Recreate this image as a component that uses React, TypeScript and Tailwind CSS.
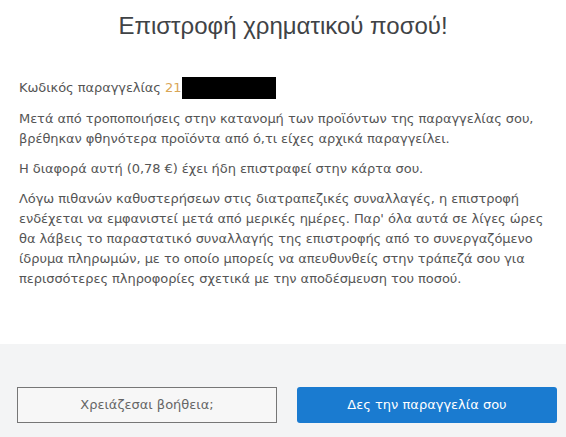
export default function App() {
  return (
    <div className="w-[566px] h-[437px] flex flex-col bg-white overflow-hidden">
      <div className="flex-1 pl-[19px] pr-[19px]">
        <h1 className="mt-[11px] text-center text-[24px] leading-[29px] text-[#3f4346] font-['Liberation_Sans',Arial,sans-serif]">
          Επιστροφή χρηματικού ποσού!
        </h1>
        <div className="mt-[37px] font-['DejaVu_Sans',Verdana,sans-serif] text-[13px] tracking-[-0.06px] leading-[20px] text-[#555555] flex flex-col gap-[10px]">
          <p className="flex items-center">
            <span>Κωδικός παραγγελίας</span>
            <span className="ml-[4px] text-[#d9a656]">21</span>
            <span className="ml-[1px] inline-block w-[94px] h-[22px] bg-black"></span>
          </p>
          <p>
            Μετά από τροποποιήσεις στην κατανομή των προϊόντων της παραγγελίας σου, βρέθηκαν φθηνότερα προϊόντα από ό,τι είχες αρχικά παραγγείλει.
          </p>
          <p>Η διαφορά αυτή (0,78 €) έχει ήδη επιστραφεί στην κάρτα σου.</p>
          <p>
            Λόγω πιθανών καθυστερήσεων στις διατραπεζικές συναλλαγές, η επιστροφή ενδέχεται να εμφανιστεί μετά από μερικές ημέρες. Παρ' όλα αυτά σε λίγες ώρες θα λάβεις το παραστατικό συναλλαγής της επιστροφής από το συνεργαζόμενο ίδρυμα πληρωμών, με το οποίο μπορείς να απευθυνθείς στην τράπεζά σου για περισσότερες πληροφορίες σχετικά με την αποδέσμευση του ποσού.
          </p>
        </div>
      </div>
      <div className="h-[93px] bg-[#f3f4f5] flex items-start gap-[20px] pt-[43px] pl-[17px] pr-[9px] font-['DejaVu_Sans',Verdana,sans-serif] text-[13px]">
        <button className="w-[260px] h-[36px] border border-[#767676] bg-[#f7f7f7] text-[#666666]">
          Χρειάζεσαι βοήθεια;
        </button>
        <button className="w-[260px] h-[36px] rounded-[3px] bg-[#1a7bd0] text-white">
          Δες την παραγγελία σου
        </button>
      </div>
    </div>
  );
}
